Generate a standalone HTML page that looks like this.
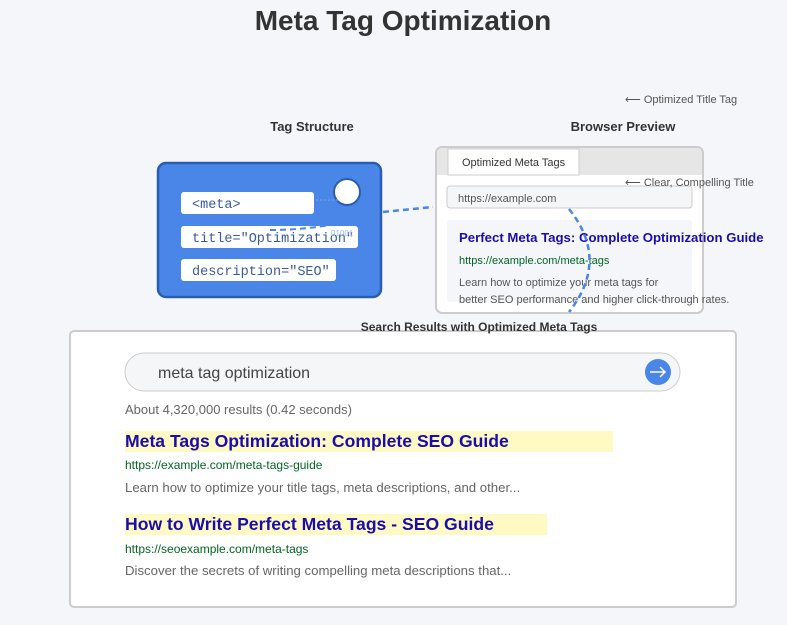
<!DOCTYPE html>
<html><head><meta charset="utf-8"><style>html,body{margin:0;padding:0;background:#f5f6fa;}svg{display:block;font-family:"Liberation Sans",sans-serif;}</style></head>
<body>
<svg width="787" height="625" viewBox="0 0 787 625" xmlns="http://www.w3.org/2000/svg">
<rect width="787" height="625" fill="#f5f6fa"/>
<text x="403" y="30" text-anchor="middle" font-size="28" font-weight="bold" fill="#333">Meta Tag Optimization</text>
<text x="625" y="103" font-size="11" fill="#555">⟵ Optimized Title Tag</text>
<text x="312" y="131" text-anchor="middle" font-size="13" font-weight="bold" fill="#333">Tag Structure</text>
<text x="623" y="131" text-anchor="middle" font-size="13" font-weight="bold" fill="#333">Browser Preview</text>

<rect x="158" y="163" width="223" height="134" rx="8" fill="#4a86e8" stroke="#2a5db0" stroke-width="2.5"/>
<circle cx="347" cy="192" r="13" fill="#fff" stroke="#2a5db0" stroke-width="2"/>
<rect x="181" y="192" width="133" height="22" rx="3" fill="#fff"/>
<rect x="181" y="226" width="177" height="22" rx="3" fill="#fff"/>
<rect x="181" y="259" width="155" height="22" rx="3" fill="#fff"/>
<g font-family="Liberation Mono,monospace" font-size="13.5" fill="#3a5aa0">
<text x="192" y="208">&lt;meta&gt;</text>
<text x="192" y="242">title="Optimization"</text>
<text x="192" y="275">description="SEO"</text>
</g>
<line x1="316" y1="200" x2="338" y2="200" stroke="#7fa6e8" stroke-width="1" stroke-dasharray="2,2"/>
<text x="331" y="236" font-size="8" fill="#9ab8ea">01001</text>
<path d="M270 230 Q300 230 330 225" stroke="#4a86e8" stroke-width="2" fill="none" stroke-dasharray="6,4"/>
<path d="M383 212 L433 207" stroke="#4a86e8" stroke-width="2.5" fill="none" stroke-dasharray="6,4"/>

<rect x="436" y="147" width="267" height="166" rx="6" fill="#fff" stroke="#ccc" stroke-width="2"/>
<path d="M437 153 a5 5 0 0 1 5 -5 h255 a5 5 0 0 1 5 5 v22 h-265z" fill="#e6e6e6"/>
<rect x="448" y="149" width="131" height="26" fill="#fff" stroke="#ccc" stroke-width="1"/>
<text x="462" y="166" font-size="11" fill="#333">Optimized Meta Tags</text>
<rect x="447" y="186" width="245" height="22" rx="3" fill="#f5f6f8" stroke="#ccc"/>
<text x="458" y="202" font-size="11" fill="#555">https://example.com</text>
<rect x="447" y="220" width="245" height="82" rx="3" fill="#f5f6fa"/>
<text x="459" y="242" font-size="13.2" font-weight="bold" fill="#1a0dab">Perfect Meta Tags: Complete Optimization Guide</text>
<text x="459" y="264" font-size="11" fill="#006621">https://example.com/meta-tags</text>
<text x="459" y="286" font-size="11" fill="#555">Learn how to optimize your meta tags for</text>
<text x="459" y="303" font-size="11" fill="#555">better SEO performance and higher click-through rates.</text>
<text x="625" y="186" font-size="11" fill="#555">⟵ Clear, Compelling Title</text>
<path d="M569 209 Q610 260 569 312" stroke="#4a86e8" stroke-width="2.5" fill="none" stroke-dasharray="6,4"/>

<rect x="70" y="331" width="666" height="276" rx="4" fill="#fff" stroke="#ccc" stroke-width="2"/>
<text x="479" y="331" text-anchor="middle" font-size="12" font-weight="bold" fill="#333">Search Results with Optimized Meta Tags</text>
<rect x="125" y="353" width="555" height="38" rx="19" fill="#f5f6f8" stroke="#ccc"/>
<text x="158" y="378" font-size="16" fill="#444">meta tag optimization</text>
<circle cx="658" cy="372" r="13" fill="#4a86e8"/>
<path d="M650 372 h15 M660 367 l5 5 l-5 5" stroke="#fff" stroke-width="1.5" fill="none"/>
<text x="125" y="414" font-size="13" fill="#666">About 4,320,000 results (0.42 seconds)</text>
<rect x="125" y="431" width="488" height="21" fill="#fff9c4"/>
<text x="125" y="447" font-size="17.6" font-weight="bold" fill="#1a0dab">Meta Tags Optimization: Complete SEO Guide</text>
<text x="125" y="469" font-size="12" fill="#006621">https://example.com/meta-tags-guide</text>
<text x="125" y="492" font-size="13.2" fill="#666">Learn how to optimize your title tags, meta descriptions, and other...</text>
<rect x="125" y="514" width="422" height="21" fill="#fff9c4"/>
<text x="125" y="530" font-size="17.6" font-weight="bold" fill="#1a0dab">How to Write Perfect Meta Tags - SEO Guide</text>
<text x="125" y="553" font-size="12" fill="#006621">https://seoexample.com/meta-tags</text>
<text x="125" y="575" font-size="13.2" fill="#666">Discover the secrets of writing compelling meta descriptions that...</text>
</svg>
</body></html>
